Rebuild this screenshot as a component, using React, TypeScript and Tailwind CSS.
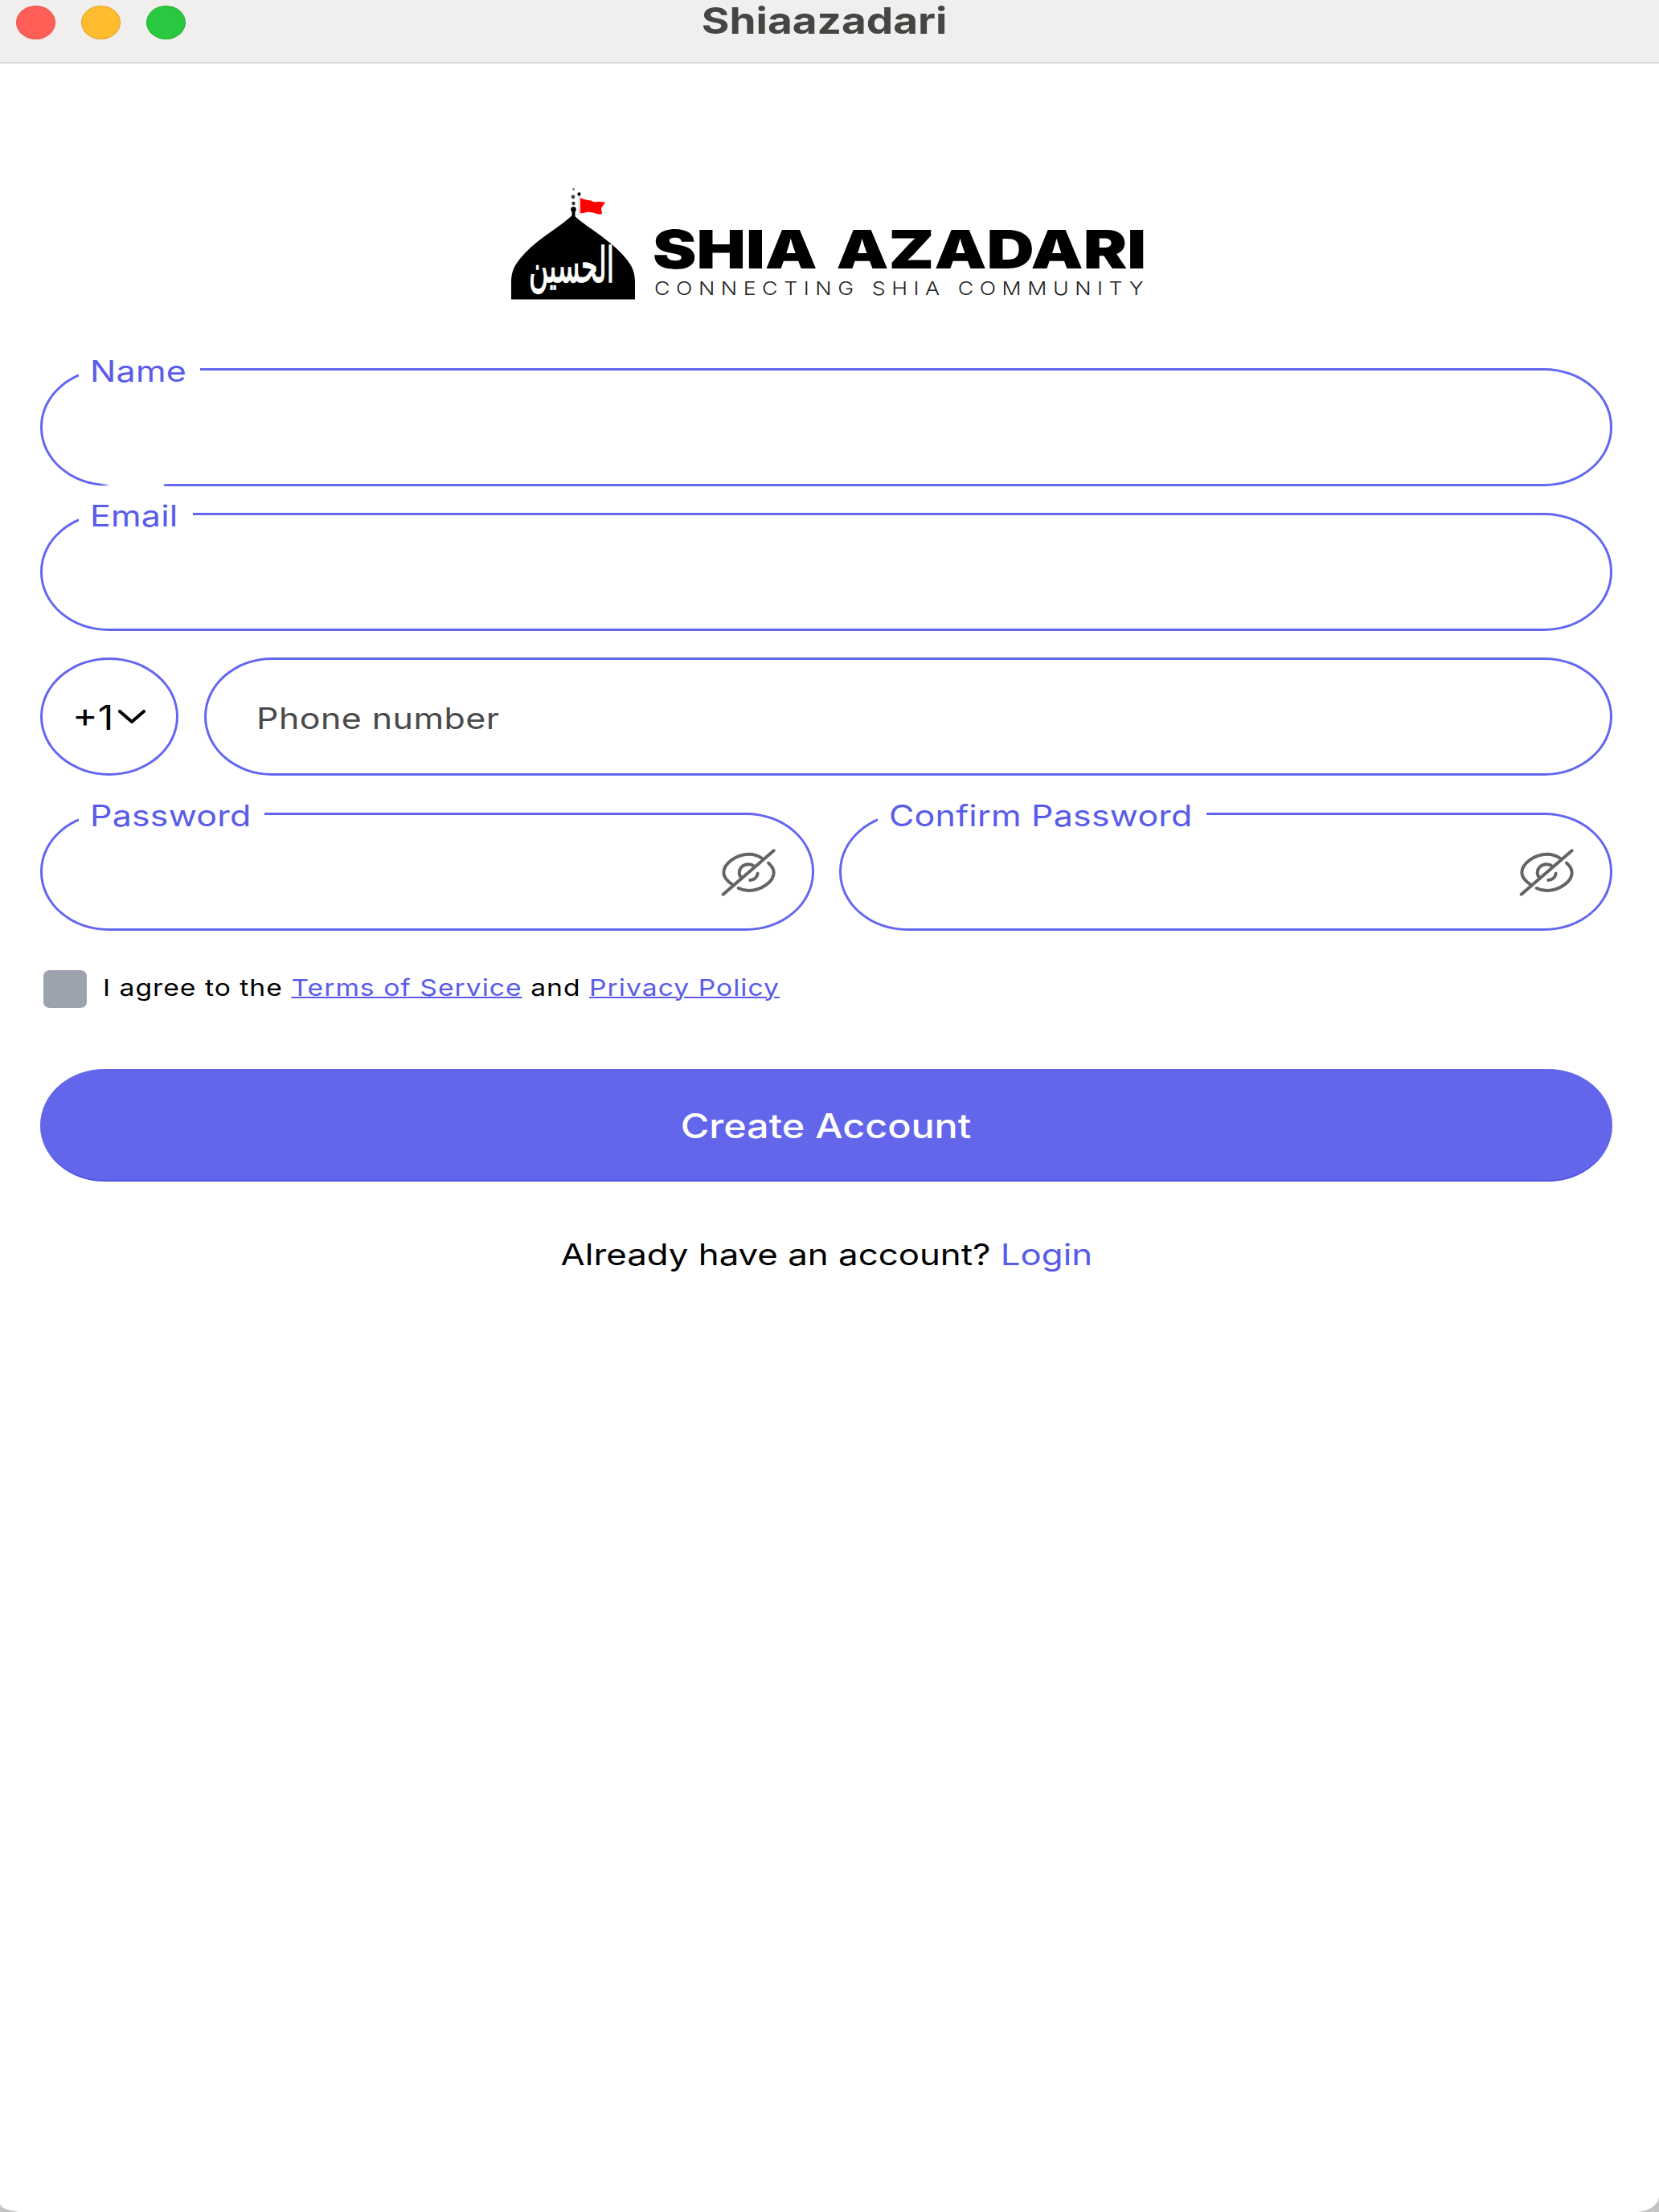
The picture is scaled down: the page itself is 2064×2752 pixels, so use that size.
import { useState } from 'react';
import clsx from 'clsx';

type FieldProps = {
  label: string;
  notch: string;
  type?: string;
  className?: string;
  toggle?: boolean;
};

function Logo() {
  return (
    <div className="flex items-end justify-center h-[140px] w-[786px]">
      <svg width="154" height="140" viewBox="0 0 154 140" className="shrink-0 overflow-visible">
        <path d="M77 34C94 50 118 62 137 82C149 95 154 103 154 118V139.500H0V118C0 103 5 95 17 82C36 62 60 50 77 34Z" fill="#000" />
        <path d="M77.500 38V26" stroke="#000" strokeWidth="4" />
        <circle cx="77.500" cy="27.500" r="3.300" fill="#000" />
        <circle cx="77.500" cy="20" r="2.200" fill="#333" />
        <circle cx="77" cy="12" r="2.400" fill="#444" />
        <circle cx="77.500" cy="2.500" r="1.400" fill="#777" />
        <path d="M84.500 8V34" stroke="#ccc" strokeWidth="1.500" />
        <circle cx="84.500" cy="8.500" r="2.200" fill="#111" />
        <path d="M86 13C93 17 98 15 102 18C107 19 112 17 117 19L112 26L113 33C108 35 104 31 98 31C94 30 90 33 86 32Z" fill="#f00" />
        <text
          x="75"
          y="118"
          textAnchor="middle"
          textLength="106"
          lengthAdjust="spacingAndGlyphs"
          fill="#fff"
          stroke="#fff"
          strokeWidth="1.500"
          fontSize="60"
          className="font-['DejaVu_Sans',sans-serif]"
        >
          الحسين
        </text>
      </svg>
      <div className="flex flex-col w-[608px] ml-[22px]">
        <span className="h-[56px] leading-[56px] text-[66px] font-black [word-spacing:6px] whitespace-nowrap origin-left scale-x-[1.24]">
          SHIA AZADARI
        </span>
        <span className="h-[35px] mt-[4px] mb-[-4px] ml-[2px] leading-[35px] text-[23px] font-light tracking-[6.500px] text-[#222] whitespace-nowrap origin-left scale-x-[1.163]">
          CONNECTING SHIA COMMUNITY
        </span>
      </div>
    </div>
  );
}

function EyeOff() {
  return (
    <svg
      width="68"
      height="60"
      viewBox="0 0 204 180"
      fill="none"
      stroke="#646464"
      strokeWidth="12"
      strokeLinecap="round"
    >
      <path d="M8 173L197 10" />
      <path d="M154 39C139 28 122 23 104 23C58 23 10 58 10 92C10 109 24 124 43 137" />
      <path d="M177 56C190 67 197 79 197 92C197 125 151 159 104 159C90 159 77 156 65 150" />
      <path d="M124 68C118 63 110 61 102 61C83 61 68 75 68 92C68 100 72 107 78 112" />
      <path d="M137 95C135 109 124 119 109 120" />
    </svg>
  );
}

function Field({ label, notch, type = 'text', className, toggle }: FieldProps) {
  const [visible, setVisible] = useState(false);

  return (
    <div
      className={clsx(
        'relative flex items-center h-[147px] border-3 border-[#6466f2] rounded-[85px/73px]',
        className
      )}
    >
      <label className={clsx('absolute left-[45px] -top-[18px] h-[38px] pl-[14px] bg-white', notch)}>
        <span className="block w-max leading-[38px] text-[37px] tracking-[0.200px] text-[#5a5ce8] whitespace-nowrap origin-left scale-x-[1.16]">
          {label}
        </span>
      </label>
      <input
        type={toggle && visible ? 'text' : type}
        aria-label={label}
        className="w-full h-full px-[65px] bg-transparent text-[37px] outline-none"
      />
      {toggle && (
        <button
          type="button"
          aria-label="Toggle password"
          onClick={() => setVisible(!visible)}
          className="shrink-0 mr-[45px]"
        >
          <EyeOff />
        </button>
      )}
    </div>
  );
}

export default function App() {
  const [agreed, setAgreed] = useState(false);

  return (
    <div className="bg-[#c4c4c4]">
      <div className="h-[2752px] w-[2064px] overflow-hidden bg-white text-black rounded-bl-[30px_11px] rounded-br-[30px_20px] font-[Inter,sans-serif]">
        {/* Title bar */}
        <header className="grid grid-cols-3 h-[79px] bg-[#f0efed] border-b-2 border-[#d9d9d8]">
          <div className="flex gap-[32px] pl-[20px] pt-[7px]">
            <span className="w-[49px] h-[42px] rounded-[50%] bg-[#ff5f57] border border-[#e9504b]" />
            <span className="w-[49px] h-[42px] rounded-[50%] bg-[#febc2e] border border-[#e0a028]" />
            <span className="w-[49px] h-[42px] rounded-[50%] bg-[#28c840] border border-[#1fae2e]" />
          </div>
          <div className="flex justify-center pr-[13px]">
            <h1 className="h-[52px] leading-[52px] text-[45px] font-bold text-[#454543] scale-x-[1.18]">
              Shiaazadari
            </h1>
          </div>
        </header>

        <main className="pl-[50px] pr-[58px]">
          <div className="flex justify-center pt-[154px]">
            <Logo />
          </div>

          <form className="mt-[85px]" onSubmit={(e) => e.preventDefault()}>
            <Field label="Name" notch="w-[151px]" />
            <div className="relative mt-[33px]">
              <div className="absolute left-[75px] -top-[38px] w-[88px] h-[8px] bg-linear-to-r from-transparent via-white via-15% to-transparent" />
              <div className="absolute left-[85px] -top-[38px] w-[69px] h-[8px] bg-white" />
              <Field label="Email" notch="w-[142px]" />
            </div>

            <div className="flex gap-[32px] mt-[33px]">
              <button
                type="button"
                className="flex items-center w-[172px] h-[147px] pl-[37px] border-3 border-[#6466f2] rounded-[50%]"
              >
                <span className="w-[57px] pt-[2px] text-left text-[42px] origin-left scale-x-[1.14]">+1</span>
                <svg width="34" height="18" viewBox="0 0 34 18" fill="none" stroke="#000" strokeWidth="4">
                  <path d="M2 2L17 15L32 2" strokeLinecap="round" strokeLinejoin="round" />
                </svg>
              </button>
              <div className="flex items-center flex-1 h-[147px] pt-[4px] pl-[62px] border-3 border-[#6466f2] rounded-[85px/74px]">
                <span className="text-[37px] tracking-[0.400px] text-[#4a4a4a] whitespace-nowrap origin-left scale-x-[1.16]">
                  Phone number
                </span>
              </div>
            </div>

            <div className="flex gap-[31px] mt-[46px]">
              <Field className="flex-1" label="Password" notch="w-[231px]" type="password" toggle />
              <Field className="flex-1" label="Confirm Password" notch="w-[409px]" type="password" toggle />
            </div>

            <div className="flex items-center mt-[48px] pl-[4px] h-[49px]">
              <button
                type="button"
                role="checkbox"
                aria-checked={agreed}
                aria-label="I agree"
                onClick={() => setAgreed(!agreed)}
                className="w-[54px] h-[47px] rounded-[8px/7px] bg-[#9ca3af]"
              />
              <p className="ml-[20px] -mt-[3px] text-[29px] tracking-[0.880px] whitespace-nowrap origin-left scale-x-[1.16]">
                I agree to the{' '}
                <a className="text-[#5a5ce8] underline underline-offset-[1px] decoration-2">Terms of Service</a> and{' '}
                <a className="text-[#5a5ce8] underline underline-offset-[1px] decoration-2">Privacy Policy</a>
              </p>
            </div>

            <button
              type="submit"
              className="flex items-center justify-center w-full h-[140px] mt-[75px] rounded-[80px/70px] bg-[#6366ea] border-b-2 border-[#5054e4] text-white"
            >
              <span className="pt-[2px] text-[42px] font-medium scale-x-[1.155]">Create Account</span>
            </button>
          </form>

          <div className="flex justify-center mt-[68px]">
            <p className="h-[46px] leading-[46px] text-[37px] whitespace-nowrap scale-x-[1.184]">
              Already have an account? <a className="text-[#5a5ce8]">Login</a>
            </p>
          </div>
        </main>
      </div>
    </div>
  );
}
